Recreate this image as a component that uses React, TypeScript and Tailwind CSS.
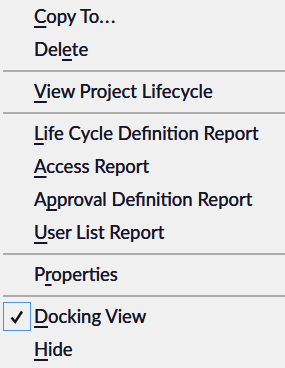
import React from "react";

type Item = { pre: string; key: string; post: string; tail?: string; checked?: boolean } | "sep";

const items: Item[] = [
  { pre: "", key: "C", post: "opy To", tail: "..." },
  { pre: "Del", key: "e", post: "te" },
  "sep",
  { pre: "", key: "V", post: "iew Project Lifecycle" },
  "sep",
  { pre: "", key: "L", post: "ife Cycle Definition Report" },
  { pre: "", key: "A", post: "ccess Report" },
  { pre: "A", key: "p", post: "proval Definition Report" },
  { pre: "", key: "U", post: "ser List Report" },
  "sep",
  { pre: "P", key: "r", post: "operties" },
  "sep",
  { pre: "", key: "D", post: "ocking View", checked: true },
  { pre: "", key: "H", post: "ide" },
];

export default function App() {
  return (
    <div className="w-[285px] h-[368px] bg-[#f0f0f0] flex flex-col text-[#14142a] text-[18.5px] overflow-hidden font-['Lato','Noto_Sans',sans-serif]">
      {items.map((it, i) =>
        it === "sep" ? (
          <div key={i} className="h-[9px] flex items-center pl-[3px] shrink-0">
            <div className="h-[2px] w-full bg-[#acacac]" />
          </div>
        ) : (
          <div key={i} className="h-[33px] flex items-center shrink-0">
            <div className="w-[34px] h-full flex items-center pl-[3px]">
              {it.checked && (
                <div className="w-[28px] h-[29px] border-[1.5px] border-[#4a94e0] flex items-center justify-center">
                  <svg width="16" height="16" viewBox="0 0 16 16">
                    <path d="M2.5 8.5 L6.2 13 L13 2.5" fill="none" stroke="#111" strokeWidth="2.4" />
                  </svg>
                </div>
              )}
            </div>
            <span className="leading-none whitespace-nowrap [text-shadow:0_0_0.4px_#14142a]">
              {it.pre}
              <span className="underline underline-offset-[3px] decoration-[1.5px]">{it.key}</span>
              {it.post}
              {it.tail && <span className="tracking-[1.5px]">{it.tail}</span>}
            </span>
          </div>
        )
      )}
    </div>
  );
}
